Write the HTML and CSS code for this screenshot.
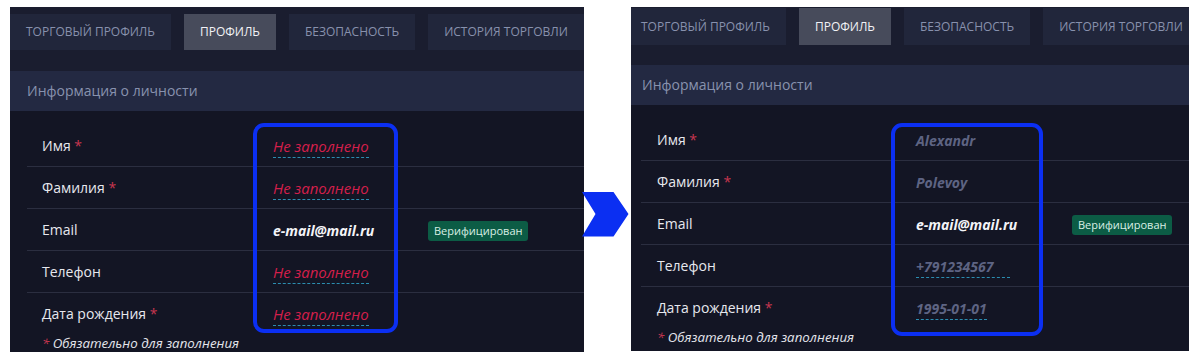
FILE: index.html
```html
<!DOCTYPE html>
<html lang="ru">

<head>
    <meta charset="UTF-8">
    <meta name="viewport" content="width=device-width, initial-scale=1.0">
    <title>Профиль</title>
    <link rel="stylesheet" href="styles.css">
</head>

<body>
    <div class="compare">

        <!-- before -->
        <div class="panel panel-before">
            <div class="tabs">
                <div class="tab">Торговый профиль</div>
                <div class="tab active">Профиль</div>
                <div class="tab">Безопасность</div>
                <div class="tab">История торговли</div>
            </div>

            <div class="section-title">Информация о личности</div>

            <div class="rows">
                <div class="row">
                    <div class="label">Имя <span class="req">*</span></div>
                    <div class="value"><span class="empty">Не заполнено</span></div>
                </div>
                <div class="row">
                    <div class="label">Фамилия <span class="req">*</span></div>
                    <div class="value"><span class="empty">Не заполнено</span></div>
                </div>
                <div class="row">
                    <div class="label">Email</div>
                    <div class="value"><span class="email">e-mail@mail.ru</span></div>
                    <div><span class="badge">Верифицирован</span></div>
                </div>
                <div class="row">
                    <div class="label">Телефон</div>
                    <div class="value"><span class="empty">Не заполнено</span></div>
                </div>
                <div class="row">
                    <div class="label">Дата рождения <span class="req">*</span></div>
                    <div class="value"><span class="empty">Не заполнено</span></div>
                </div>
            </div>

            <div class="note"><span class="req">*</span> Обязательно для заполнения</div>

            <div class="highlight"></div>
        </div>

        <svg class="arrow" width="47" height="45" viewBox="0 0 47 45">
            <polygon points="0,0 31.5,0 46.5,22 31.5,44.5 0,44.5 13.5,22" fill="#0b2ff2" />
        </svg>

        <!-- after -->
        <div class="panel panel-after">
            <div class="tabs">
                <div class="tab">Торговый профиль</div>
                <div class="tab active">Профиль</div>
                <div class="tab">Безопасность</div>
                <div class="tab">История торговли</div>
            </div>

            <div class="section-title">Информация о личности</div>

            <div class="rows">
                <div class="row">
                    <div class="label">Имя <span class="req">*</span></div>
                    <div class="value"><span class="filled">Alexandr</span></div>
                </div>
                <div class="row">
                    <div class="label">Фамилия <span class="req">*</span></div>
                    <div class="value"><span class="filled">Polevoy</span></div>
                </div>
                <div class="row">
                    <div class="label">Email</div>
                    <div class="value"><span class="email">e-mail@mail.ru</span></div>
                    <div><span class="badge">Верифицирован</span></div>
                </div>
                <div class="row">
                    <div class="label">Телефон</div>
                    <div class="value"><span class="filled editable phone">+791234567</span></div>
                </div>
                <div class="row">
                    <div class="label">Дата рождения <span class="req">*</span></div>
                    <div class="value"><span class="filled editable">1995-01-01</span></div>
                </div>
            </div>

            <div class="note"><span class="req">*</span> Обязательно для заполнения</div>

            <div class="highlight"></div>
        </div>

    </div>
</body>

</html>
```

FILE: styles.css
```css
body {
    margin: 0;
    background-color: #ffffff;
    font-family: "Open Sans", "Liberation Sans", sans-serif;
}

.compare {
    display: flex;
    align-items: flex-start;
    padding-left: 10px;
}

.panel {
    position: relative;
    overflow: hidden;
    background-color: #131524;
    margin-top: 7px;
}

.panel-before {
    width: 574px;
    height: 345px;
}

.panel-after {
    width: 558px;
    height: 344px;
    margin-left: 2px;
}

.arrow {
    position: relative;
    z-index: 2;
    margin-top: 192px;
    margin-left: -2px;
    flex-shrink: 0;
}

/* tabs */

.tabs {
    display: flex;
    gap: 13px;
    background-color: #1a1d2f;
    padding: 7px 0 21px 0;
    white-space: nowrap;
}

.panel-after .tabs {
    padding: 1px 0 20px 0;
    margin-left: -6px;
}

.tab {
    height: 36px;
    line-height: 36px;
    padding: 0 16px;
    background-color: #21263b;
    color: #8891ad;
    font-size: 12px;
    text-transform: uppercase;
    flex-shrink: 0;
}

.panel-after .tab {
    height: 37px;
    line-height: 37px;
}

.tab.active {
    background-color: #474b5b;
    color: #f2f2f6;
}

.section-title {
    height: 40px;
    line-height: 40px;
    padding-left: 17px;
    background-color: #232942;
    color: #8892ae;
    font-size: 14px;
}

.panel-after .section-title {
    padding-left: 11px;
}

/* rows */

.rows {
    padding: 14px 0 0 17px;
}

.panel-after .rows {
    padding-left: 10px;
}

.row {
    display: grid;
    grid-template-columns: 231px 155px auto;
    align-items: center;
    height: 41px;
    padding-left: 15px;
    border-bottom: 1px solid #2b2e40;
}

.panel-after .row {
    grid-template-columns: 259px 156px auto;
    padding-left: 16px;
}

.row:last-child {
    border-bottom: none;
}

.label {
    color: #e7e8ee;
    font-size: 14px;
}

.req {
    color: #c8364f;
}

.value {
    font-size: 15px;
    font-style: italic;
}

.empty {
    color: #d41f4b;
    padding-bottom: 1px;
    border-bottom: 1px dashed #2b8db0;
}

.filled {
    color: #5e6483;
    font-weight: 700;
    font-size: 14px;
}

.editable {
    padding-bottom: 1px;
    border-bottom: 1px dashed #2b8db0;
}

.phone {
    padding-right: 17px;
}

.email {
    color: #f4f4f8;
    font-weight: 700;
    font-size: 14px;
}

.badge {
    display: inline-block;
    padding: 2px 6px;
    border-radius: 3px;
    background-color: #0c5c45;
    color: #d9efe6;
    font-size: 11px;
    line-height: 16px;
}

.note {
    height: 18px;
    line-height: 18px;
    padding-left: 32px;
    color: #e4e5ec;
    font-size: 13.3px;
    font-style: italic;
}

.panel-after .note {
    padding-left: 26px;
}

/* annotation frame */

.highlight {
    position: absolute;
    border: 4px solid #0b2ff2;
    border-radius: 11px;
    box-sizing: border-box;
}

.panel-before .highlight {
    left: 243px;
    top: 116px;
    width: 145px;
    height: 210px;
}

.panel-after .highlight {
    left: 260px;
    top: 116px;
    width: 152px;
    height: 213px;
}
```
